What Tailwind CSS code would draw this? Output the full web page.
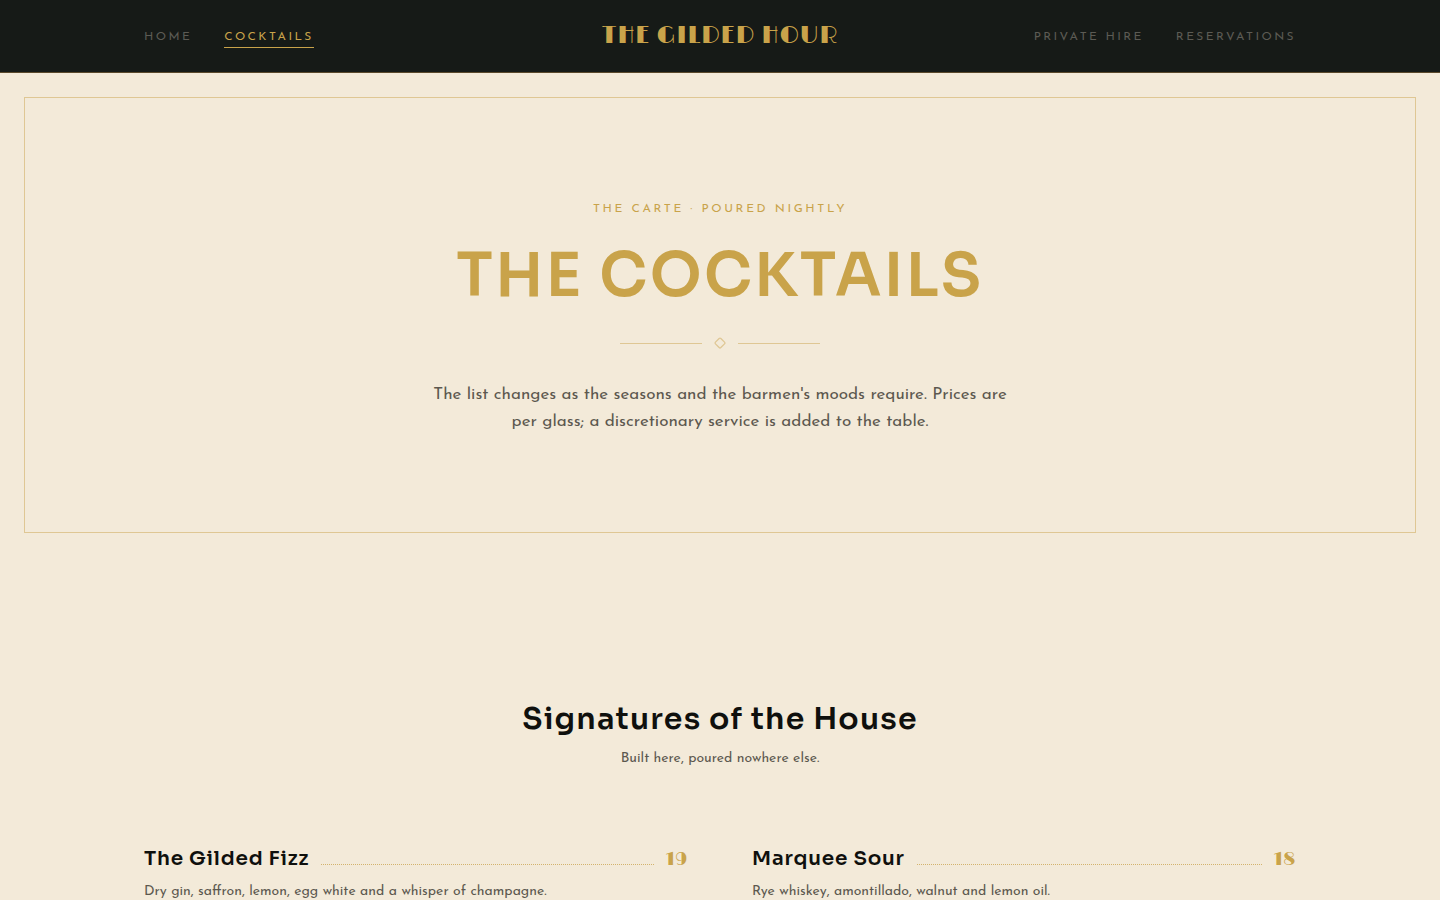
<!doctype html>
<html lang="en">

<head>
    <meta charset="UTF-8">
    <meta name="viewport" content="width=device-width, initial-scale=1.0">
    <script src="https://cdn.jsdelivr.net/npm/@tailwindcss/browser@4"></script>
    <title>The Cocktails - The Gilded Hour</title>
</head>

<body class="bg-[#f3ead9] font-['Josefin_Sans','Lato',sans-serif] text-[#5c584f]">
    <header class="bg-[#161a17] border-b border-[#5b4a2c]">
        <div class="max-w-6xl mx-auto h-18 grid grid-cols-[1fr_auto_1fr] items-center">
            <nav class="flex gap-8 text-xs leading-5 tracking-[0.2em] uppercase text-[#5c5b54]" aria-label="Menu">
                <a href="#" class="pt-0.5 border-b border-transparent">Home</a>
                <a href="#" class="pt-0.5 border-b border-[#c9a34a] text-[#c9a34a]" aria-current="page">Cocktails</a>
            </nav>
            <a href="#" class="font-['Limelight','Liberation_Serif',serif] text-2xl tracking-[0.04em] uppercase text-[#c9a34a]">The Gilded Hour</a>
            <nav class="flex gap-8 justify-end text-xs leading-5 tracking-[0.2em] uppercase text-[#5c5b54]" aria-label="Bookings">
                <a href="#" class="pt-0.5 border-b border-transparent">Private Hire</a>
                <a href="#" class="pt-0.5 border-b border-transparent">Reservations</a>
            </nav>
        </div>
    </header>

    <main>
        <section class="m-6 border border-[#dfc794] px-6 py-24 flex flex-col items-center text-center">
            <p class="text-xs leading-[30px] tracking-[0.22em] uppercase text-[#c9a34a]">The Carte · Poured Nightly</p>
            <h1 class="mt-4 font-['Sora','Inter',sans-serif] font-semibold text-[60px] leading-[71px] tracking-[0.04em] uppercase text-[#c9a34a]">The Cocktails</h1>
            <div class="mt-[26px] w-50 flex items-center gap-3 text-[#dfc794]">
                <span class="flex-1 border-t"></span>
                <svg class="size-3" viewBox="0 0 12 12" fill="none" stroke="currentColor" stroke-width="1.3" aria-hidden="true">
                    <rect x="2.2" y="2.2" width="7.6" height="7.6" rx="1.2" transform="rotate(45 6 6)" />
                </svg>
                <span class="flex-1 border-t"></span>
            </div>
            <p class="mt-8 mb-px max-w-xl text-[17px] leading-[27px]">The list changes as the seasons and the barmen's moods require. Prices are per glass; a discretionary service is added to the table.</p>
        </section>

        <section class="max-w-6xl mx-auto pt-35 pb-32">
            <div class="text-center">
                <h2 class="font-['Sora','Inter',sans-serif] font-semibold text-3xl leading-[44px] tracking-[0.04em] text-[#0f100d]">Signatures of the House</h2>
                <p class="mt-1.5 text-sm leading-6">Built here, poured nowhere else.</p>
            </div>
            <ul class="mt-18 grid grid-cols-2 gap-x-16 gap-y-10">
                <li>
                    <div class="flex items-baseline gap-3">
                        <h3 class="font-['Sora','Inter',sans-serif] font-semibold text-xl leading-8 tracking-[0.04em] text-[#0f100d]">The Gilded Fizz</h3>
                        <span class="flex-1 border-b border-dotted border-[#d3b36d]"></span>
                        <span class="font-['Limelight','Liberation_Serif',serif] text-lg tracking-[0.04em] text-[#c9a34a]">19</span>
                    </div>
                    <p class="mt-1 text-sm leading-[26px]">Dry gin, saffron, lemon, egg white and a whisper of champagne.</p>
                </li>
                <li>
                    <div class="flex items-baseline gap-3">
                        <h3 class="font-['Sora','Inter',sans-serif] font-semibold text-xl leading-8 tracking-[0.04em] text-[#0f100d]">Marquee Sour</h3>
                        <span class="flex-1 border-b border-dotted border-[#d3b36d]"></span>
                        <span class="font-['Limelight','Liberation_Serif',serif] text-lg tracking-[0.04em] text-[#c9a34a]">18</span>
                    </div>
                    <p class="mt-1 text-sm leading-[26px]">Rye whiskey, amontillado, walnut and lemon oil.</p>
                </li>
            </ul>
        </section>
    </main>
</body>

</html>
